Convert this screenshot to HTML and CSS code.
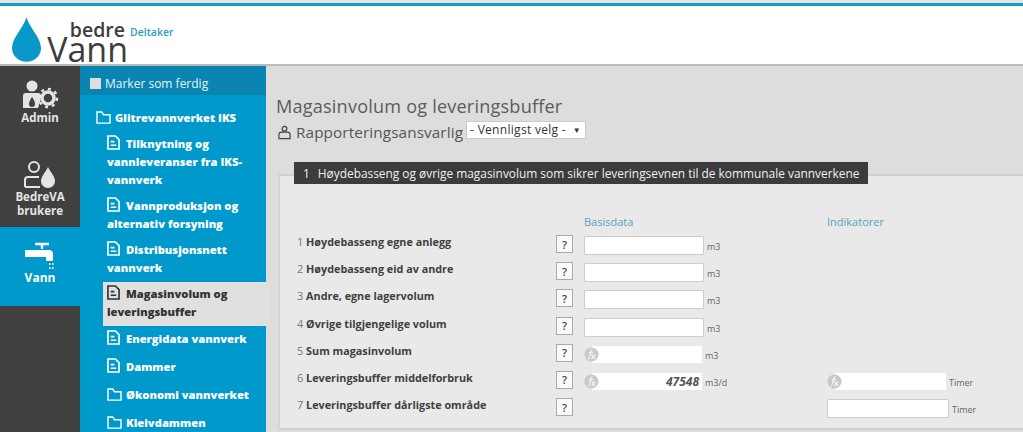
FILE: index.html
```html
<!DOCTYPE html>
<html lang="en">
<head>
  <meta charset="UTF-8">
  <title>Magasinvolum og leveringsbuffer</title>
  <link rel="stylesheet" href="styles.css">
</head>
<body>

  <svg class="icon-defs" width="0" height="0">
    <symbol id="doc" viewBox="0 0 14 16">
      <path d="M1 1h8l4 4v10H1z M4 7h4 M4 11h6" fill="none" stroke="currentColor" stroke-width="1.8"/>
    </symbol>
    <symbol id="folder" viewBox="0 0 16 14">
      <path d="M1 1h5l2 3h7v9H1z" fill="none" stroke="currentColor" stroke-width="1.5"/>
    </symbol>
    <symbol id="fx" viewBox="0 0 16 16">
      <circle cx="8" cy="8" r="7.5" fill="#c9c9c9"/>
      <path d="M9 3C7 3 7 5 6.500 8S5 13 4 13M5 6h5M8 8l4 5M12 8l-4 5" fill="none" stroke="#f4f4f4" stroke-width="1.300"/>
    </symbol>
  </svg>

  <header class="top">
    <div class="logo">
      <svg class="drop" viewBox="0 0 30 46">
        <path d="M15 0C18 11 30 21 30 32A15 14 0 0 1 0 32C0 21 12 11 15 0z" fill="#0a97c9"/>
      </svg>
      <div class="wordmark">
        <span class="bedre">bedre</span>
        <span class="vann">Vann</span>
      </div>
      <span class="role">Deltaker</span>
    </div>
  </header>

  <div class="layout">
    <nav class="rail">
      <a class="rail-item admin">
        <svg class="rail-icon" viewBox="0 0 38 30" width="38" height="30">
          <circle cx="11" cy="6" r="5.500" fill="#e4e4e4"/>
          <path d="M2 28V16q0-3 3-3h12q3 0 3 3v2l-3 10z" fill="#e4e4e4"/>
          <path d="M11 17c2 3 3 5 3 7a3 3 0 0 1-6 0c0-2 1-4 3-7z" fill="#404040"/>
          <circle cx="27" cy="18" r="6" fill="none" stroke="#e4e4e4" stroke-width="3.500"/>
          <circle cx="27" cy="18" r="9" fill="none" stroke="#e4e4e4" stroke-width="2.500" stroke-dasharray="3 4"/>
        </svg>
        <span>Admin</span>
      </a>
      <a class="rail-item users">
        <svg class="rail-icon" viewBox="0 0 32 28" width="32" height="28">
          <circle cx="10" cy="6" r="5" fill="none" stroke="#e4e4e4" stroke-width="2"/>
          <path d="M1 26v-7q0-3 3-3h11M1 26h15" fill="none" stroke="#e4e4e4" stroke-width="2"/>
          <path d="M24 6c2 5 7 9 7 14a7 7 0 0 1-14 0c0-5 5-9 7-14z" fill="#e4e4e4"/>
        </svg>
        <span>BedreVA<br>brukere</span>
      </a>
      <a class="rail-item vann-link">
        <svg class="rail-icon" viewBox="0 0 32 30" width="32" height="30">
          <path d="M11 3h14M18 3v5" fill="none" stroke="#fff" stroke-width="2.500"/>
          <path d="M1 9h24q4 0 4 4v7h-7v-4H1z" fill="#fff"/>
          <path d="M25 23h1.500M28 23h1.500M25 27h1.500M28 27h1.500" stroke="#fff" stroke-width="2"/>
        </svg>
        <span>Vann</span>
      </a>
    </nav>

    <aside class="sidebar">
      <div class="mark-done"><span class="checkbox"></span>Marker som ferdig</div>
      <ul class="tree">
        <li class="tree-root"><svg class="ico-folder"><use href="#folder"/></svg>Glitrevannverket IKS</li>
        <li class="tree-doc"><svg class="ico-doc"><use href="#doc"/></svg>Tilknytning og vannleveranser fra IKS-vannverk</li>
        <li class="tree-doc"><svg class="ico-doc"><use href="#doc"/></svg>Vannproduksjon og alternativ forsyning</li>
        <li class="tree-doc"><svg class="ico-doc"><use href="#doc"/></svg>Distribusjonsnett vannverk</li>
        <li class="tree-doc active"><svg class="ico-doc"><use href="#doc"/></svg>Magasinvolum og leveringsbuffer</li>
        <li class="tree-doc single"><svg class="ico-doc"><use href="#doc"/></svg>Energidata vannverk</li>
        <li class="tree-doc single"><svg class="ico-doc"><use href="#doc"/></svg>Dammer</li>
        <li class="tree-doc single"><svg class="ico-folder"><use href="#folder"/></svg>Økonomi vannverket</li>
        <li class="tree-doc single"><svg class="ico-folder"><use href="#folder"/></svg>Kleivdammen</li>
      </ul>
    </aside>

    <main class="content">
      <h1>Magasinvolum og leveringsbuffer</h1>
      <div class="responsible">
        <svg class="person" viewBox="0 0 14 15" width="13" height="15">
          <circle cx="7" cy="3.500" r="2.500" fill="none" stroke="#444" stroke-width="1.300"/>
          <path d="M1 14V10q0-3 3-3h6q3 0 3 3v4z" fill="none" stroke="#444" stroke-width="1.300"/>
        </svg>
        <span>Rapporteringsansvarlig</span>
        <span class="fake-select">- Vennligst velg - <i>▼</i></span>
      </div>

      <section class="panel">
        <h2><span>1</span>Høydebasseng og øvrige magasinvolum som sikrer leveringsevnen til de kommunale vannverkene</h2>
        <div class="heads">
          <span class="head-basis">Basisdata</span>
          <span class="head-ind">Indikatorer</span>
        </div>

        <div class="row">
          <label><small>1</small> Høydebasseng egne anlegg</label>
          <button type="button" class="help">?</button>
          <div class="cell"><input type="text"><em>m3</em></div>
        </div>
        <div class="row">
          <label><small>2</small> Høydebasseng eid av andre</label>
          <button type="button" class="help">?</button>
          <div class="cell"><input type="text"><em>m3</em></div>
        </div>
        <div class="row">
          <label><small>3</small> Andre, egne lagervolum</label>
          <button type="button" class="help">?</button>
          <div class="cell"><input type="text"><em>m3</em></div>
        </div>
        <div class="row">
          <label><small>4</small> Øvrige tilgjengelige volum</label>
          <button type="button" class="help">?</button>
          <div class="cell"><input type="text"><em>m3</em></div>
        </div>
        <div class="row">
          <label><small>5</small> Sum magasinvolum</label>
          <button type="button" class="help">?</button>
          <div class="cell"><div class="calc"><svg class="ico-fx"><use href="#fx"/></svg></div><em>m3</em></div>
        </div>
        <div class="row">
          <label><small>6</small> Leveringsbuffer middelforbruk</label>
          <button type="button" class="help">?</button>
          <div class="cell"><div class="calc"><svg class="ico-fx"><use href="#fx"/></svg><b>47548</b></div><em>m3/d</em></div>
          <div class="cell"><div class="calc wide"><svg class="ico-fx"><use href="#fx"/></svg></div><em>Timer</em></div>
        </div>
        <div class="row">
          <label><small>7</small> Leveringsbuffer dårligste område</label>
          <button type="button" class="help">?</button>
          <div class="cell"></div>
          <div class="cell"><input type="text" class="wide"><em>Timer</em></div>
        </div>
      </section>
    </main>
  </div>

</body>
</html>
```

FILE: styles.css
```css
* {
  box-sizing: border-box;
}
body {
  margin: 0;
  height: 432px;
  overflow: hidden;
  font-family: "Open Sans", Arial, sans-serif;
  background-color: #ddd;
  color: #444;
}
.icon-defs {
  position: absolute;
}

/* header */
.top {
  height: 66px;
  background-color: #fff;
  border-top: 3px solid #e4e4e4;
  border-bottom: 2px solid #bbb;
  box-shadow: inset 0 3px 0 #1b9ac4;
}
.logo {
  display: flex;
  align-items: flex-start;
  height: 100%;
  padding-left: 12px;
}
.drop {
  width: 29px;
  height: 45px;
  margin-top: 14px;
}
.wordmark {
  display: flex;
  flex-direction: column;
  align-items: flex-end;
  width: 84px;
  margin-left: 3px;
  color: #3d3d3d;
}
.bedre {
  font-size: 19.500px;
  font-weight: 600;
  line-height: 15px;
  margin-top: 19px;
  margin-right: 3px;
}
.vann {
  font-size: 34px;
  line-height: 24px;
}
.role {
  margin: 22px 0 0 2px;
  font-size: 10.500px;
  font-weight: 600;
  color: #2a9cc4;
}

/* left rail */
.layout {
  display: flex;
  height: 366px;
}
.rail {
  width: 80px;
  background-color: #404040;
  flex: none;
}
.rail-item {
  display: flex;
  flex-direction: column;
  align-items: center;
  color: #e4e4e4;
  font-size: 11.500px;
  font-weight: 700;
  line-height: 14px;
  text-align: center;
}
.rail-item.admin {
  height: 92px;
  padding-top: 14px;
}
.rail-item.admin .rail-icon {
  margin-bottom: 1px;
}
.rail-item.users {
  height: 69px;
  padding-top: 3px;
}
.rail-item.users .rail-icon {
  margin-bottom: 1px;
}
.rail-item.vann-link {
  height: 79px;
  padding-top: 14px;
  background-color: #0099cc;
  color: #fff;
  font-size: 12px;
}

/* blue tree */
.sidebar {
  width: 186px;
  flex: none;
  background-color: #0099cc;
  color: #fff;
  font-size: 11.200px;
  font-weight: 800;
  line-height: 18px;
}
.mark-done {
  display: flex;
  align-items: center;
  height: 29px;
  padding: 6px 0 0 10px;
  background-color: #0a84b0;
  font-weight: 400;
  font-size: 12px;
  color: #e6f4f9;
}
.checkbox {
  width: 11px;
  height: 11px;
  margin-right: 4px;
  background-color: #ddd;
}
.tree {
  list-style: none;
  margin: 0;
  padding: 0;
}
.tree-root {
  height: 23px;
  margin: 14px 0 0 16px;
}
.tree-doc {
  margin-left: 23px;
  padding: 3px 0 5px 4px;
}
.tree-doc.active {
  height: 44px;
  margin-right: -4px;
  background-color: #e0e0e0;
  color: #333;
}
.tree-doc.single {
  height: 28px;
  padding: 4px 0 0 4px;
}
.ico-doc {
  width: 13px;
  height: 15px;
  margin-right: 6px;
  vertical-align: -2px;
}
.ico-folder {
  width: 15px;
  height: 13px;
  margin-right: 4px;
  vertical-align: -2px;
}

/* main */
.content {
  flex: 1;
  padding: 28px 0 0 10px;
  min-width: 0;
}
h1 {
  margin: 0 0 2px;
  font-size: 18.100px;
  font-weight: 400;
  line-height: 24px;
  color: #5c5c5c;
  letter-spacing: 0.2px;
}
.responsible {
  display: flex;
  align-items: center;
  height: 24px;
  font-size: 15.300px;
  color: #555;
  letter-spacing: 0.1px;
}
.person {
  margin: 0 5px 0 2px;
}
.fake-select {
  display: flex;
  justify-content: space-between;
  width: 120px;
  height: 18px;
  margin: -4px 0 0 3px;
  padding: 0 4px 0 3px;
  background-color: #fff;
  border: 1px solid #ccc;
  font-size: 12px;
  line-height: 16px;
  letter-spacing: 0.3px;
  color: #333;
}
.fake-select i {
  font-style: normal;
  font-size: 8px;
}
.panel {
  position: relative;
  margin: 30px 0 0 2px;
  height: 256px;
  background-color: #e9e9e9;
  border-top: 2px solid #d0d0d0;
  border-left: 2px solid #d4d4d4;
  border-bottom: 2px solid #d0d0d0;
  padding-left: 17px;
}
.panel h2 {
  position: absolute;
  top: -14px;
  left: 14px;
  margin: 0;
  padding: 0 9px;
  height: 22px;
  white-space: nowrap;
  background-color: #3c3c3c;
  color: #f0f0f0;
  font-size: 11.900px;
  font-weight: 400;
  line-height: 22px;
}
.panel h2 span {
  margin-right: 8px;
}
.heads {
  display: flex;
  height: 59px;
  padding: 38px 0 0 287px;
  font-size: 11px;
  color: #5a9fc0;
}
.head-basis {
  width: 243px;
}
.row {
  display: flex;
  align-items: flex-start;
  height: 27.200px;
}
.row label {
  width: 259px;
  flex: none;
  margin-top: -1px;
  font-size: 10.800px;
  font-weight: 700;
  line-height: 15px;
  color: #3f3f3f;
}
.row small {
  font-size: 11px;
  font-weight: 400;
  color: #777;
}
.help {
  width: 17px;
  height: 18px;
  flex: none;
  margin: 0 11px 0 0;
  padding: 0;
  background-color: #fafafa;
  border: 1px solid #aaa;
  font-family: inherit;
  font-size: 11px;
  font-weight: 600;
  color: #444;
}
.cell {
  width: 243px;
  flex: none;
  display: flex;
  align-items: flex-start;
}
.cell:last-child {
  width: auto;
}
input[type="text"] {
  width: 120px;
  height: 19px;
  margin-top: 1px;
  background-color: #fff;
  border: 1px solid #ccc;
  border-radius: 1px;
}
input.wide {
  width: 122px;
}
.calc {
  display: flex;
  align-items: center;
  justify-content: space-between;
  width: 118px;
  height: 17px;
  margin-top: 2px;
  padding-right: 3px;
  background: linear-gradient(to right, transparent 8px, #fff 8px);
  font-size: 12px;
  color: #555;
}
.calc.wide {
  width: 119px;
}
.calc + em {
  margin-left: 1px;
}
.calc b {
  font-style: italic;
}
.ico-fx {
  width: 15px;
  height: 15px;
}
.cell em {
  margin: 5px 0 0 3px;
  font-style: normal;
  font-size: 9px;
  line-height: 14px;
  color: #666;
}
```
